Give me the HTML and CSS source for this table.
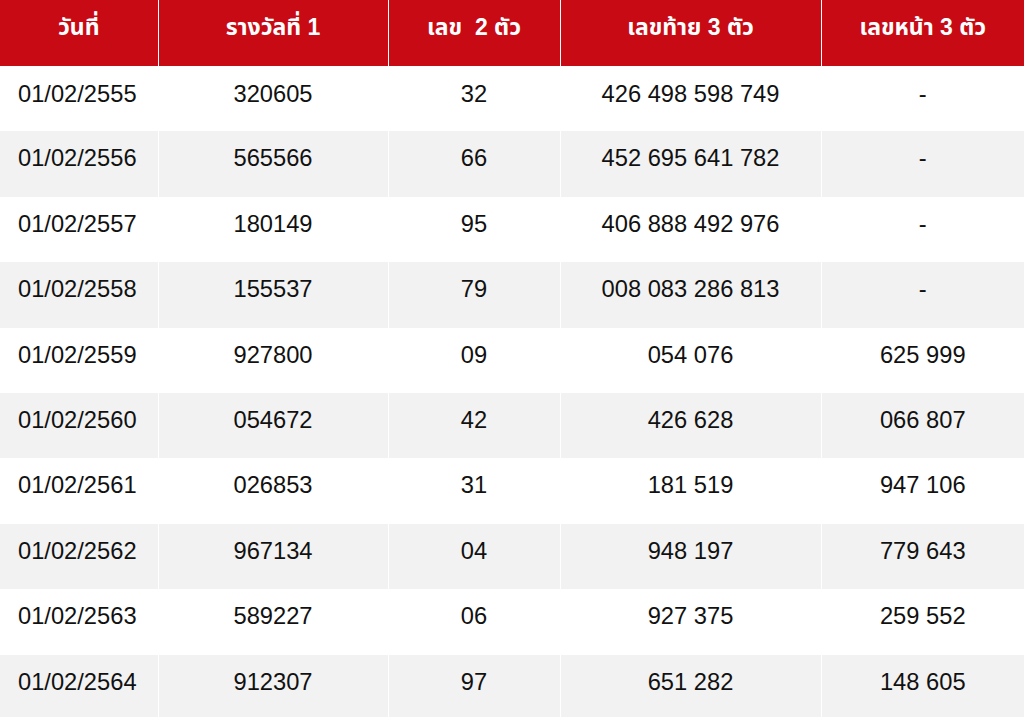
FILE: index.html
```html
<!DOCTYPE html>
<html lang="th">
<head>
<meta charset="utf-8">
<link rel="stylesheet" href="styles.css">
</head>
<body>
<table class="lotto">
  <colgroup>
    <col class="c1"><col class="c2"><col class="c3"><col class="c4"><col class="c5">
  </colgroup>
  <thead>
    <tr>
      <th>วันที่</th>
      <th>รางวัลที่ 1</th>
      <th>เลข&nbsp; 2 ตัว</th>
      <th>เลขท้าย 3 ตัว</th>
      <th>เลขหน้า 3 ตัว</th>
    </tr>
  </thead>
  <tbody>
    <tr><td class="date">01/02/2555</td><td>320605</td><td>32</td><td>426 498 598 749</td><td>-</td></tr>
    <tr><td class="date">01/02/2556</td><td>565566</td><td>66</td><td>452 695 641 782</td><td>-</td></tr>
    <tr><td class="date">01/02/2557</td><td>180149</td><td>95</td><td>406 888 492 976</td><td>-</td></tr>
    <tr><td class="date">01/02/2558</td><td>155537</td><td>79</td><td>008 083 286 813</td><td>-</td></tr>
    <tr><td class="date">01/02/2559</td><td>927800</td><td>09</td><td>054 076</td><td>625 999</td></tr>
    <tr><td class="date">01/02/2560</td><td>054672</td><td>42</td><td>426 628</td><td>066 807</td></tr>
    <tr><td class="date">01/02/2561</td><td>026853</td><td>31</td><td>181 519</td><td>947 106</td></tr>
    <tr><td class="date">01/02/2562</td><td>967134</td><td>04</td><td>948 197</td><td>779 643</td></tr>
    <tr><td class="date">01/02/2563</td><td>589227</td><td>06</td><td>927 375</td><td>259 552</td></tr>
    <tr><td class="date">01/02/2564</td><td>912307</td><td>97</td><td>651 282</td><td>148 605</td></tr>
  </tbody>
</table>
</body>
</html>
```
FILE: styles.css
```css
html, body {
  margin: 0;
  padding: 0;
  background: #ffffff;
}

body {
  font-family: "Liberation Sans", Arial, "Noto Sans Thai", "Noto Sans", sans-serif;
  color: #111111;
}

.lotto {
  width: 1024px;
  table-layout: fixed;
  border-collapse: collapse;
}

.c1 { width: 158px; }
.c2 { width: 230px; }
.c3 { width: 172px; }
.c4 { width: 261px; }
.c5 { width: 203px; }

.lotto th {
  background: #c80a14;
  color: #ffffff;
  font-size: 23px;
  font-weight: bold;
  line-height: 26px;
  height: 66px;
  box-sizing: border-box;
  padding: 14px 0 0;
  vertical-align: top;
  text-align: center;
  border-right: 1px solid #ffffff;
  border-bottom: 1px solid #ffffff;
  white-space: nowrap;
}

.lotto td {
  font-size: 23.7px;
  line-height: 28px;
  height: 65.4px;
  box-sizing: border-box;
  padding: 13px 0 0;
  vertical-align: top;
  text-align: center;
  border-right: 1px solid #ffffff;
  white-space: nowrap;
}

.lotto th:last-child,
.lotto td:last-child {
  border-right: none;
}

.lotto tbody tr:nth-child(even) td {
  background: #f2f2f2;
}

.lotto td.date {
  text-align: left;
  padding-left: 18px;
}
```
